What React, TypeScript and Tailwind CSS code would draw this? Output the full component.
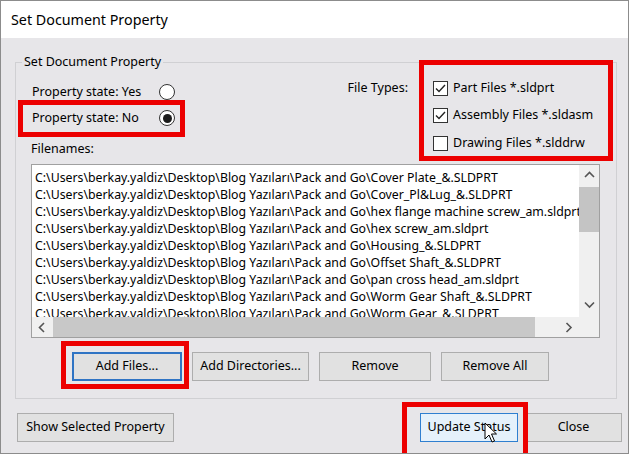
import React from "react";

const base = "C:\\Users\\berkay.yaldiz\\Desktop\\Blog Yazıları\\Pack and Go\\";
const files = [
  "Cover Plate_&.SLDPRT",
  "Cover_Pl&Lug_&.SLDPRT",
  "hex flange machine screw_am.sldprt",
  "hex screw_am.sldprt",
  "Housing_&.SLDPRT",
  "Offset Shaft_&.SLDPRT",
  "pan cross head_am.sldprt",
  "Worm Gear Shaft_&.SLDPRT",
  "Worm Gear_&.SLDPRT",
];

function Radio({ checked }: { checked?: boolean }) {
  return (
    <div className="w-[16px] h-[16px] rounded-full border border-[#333] bg-white flex items-center justify-center">
      {checked && <div className="w-[9px] h-[9px] rounded-full bg-[#1c1c1c]" />}
    </div>
  );
}

function Check({ checked, label }: { checked?: boolean; label: string }) {
  return (
    <div className="flex items-center h-[20px]">
      <div className="w-[15px] h-[15px] border border-[#333] bg-white flex items-center justify-center">
        {checked && (
          <svg width="11" height="9" viewBox="0 0 11 9">
            <polyline points="1,4.5 4,7.5 10,1" fill="none" stroke="#222" strokeWidth="1.4" />
          </svg>
        )}
      </div>
      <span className="ml-[5px] text-[12.5px]">{label}</span>
    </div>
  );
}

function Chevron({ dir }: { dir: "up" | "down" | "left" | "right" }) {
  const pts =
    dir === "up"
      ? "1,6 5.5,1.5 10,6"
      : dir === "down"
      ? "1,1.5 5.5,6 10,1.5"
      : dir === "left"
      ? "6,1 1.5,5.5 6,10"
      : "1.5,1 6,5.5 1.5,10";
  const w = dir === "up" || dir === "down" ? 11 : 8;
  const h = dir === "up" || dir === "down" ? 8 : 11;
  return (
    <svg width={w} height={h} viewBox={`0 0 ${w} ${h}`}>
      <polyline points={pts} fill="none" stroke="#555" strokeWidth="1.6" />
    </svg>
  );
}

export default function App() {
  return (
    <div className="w-[629px] h-[454px] bg-white font-['Noto_Sans',sans-serif] text-black">
      <div className="relative w-[629px] h-[454px] border border-[#8c8c8c] bg-[#e7e6e9] flex flex-col overflow-hidden">
        <div className="h-[37px] shrink-0 bg-white flex items-center pl-[10px] text-[14.3px]">
          Set Document Property
        </div>

        <fieldset className="mt-[16px] ml-[14px] mr-[11px] border border-[#d0d0d3] min-w-0 p-0">
          <legend className="ml-[6px] px-[2px] text-[12.5px] leading-[16px]">Set Document Property</legend>
          <div className="px-[15px] pb-[17px]">
            <div className="flex items-start">
              <div className="w-[287px] flex flex-col pt-[12px]">
                <div className="flex items-center h-[20px] pl-[1px]">
                  <span className="w-[127px] text-[12.5px]">Property state: Yes</span>
                  <Radio />
                </div>
                <div className="flex items-center h-[20px] pl-[1px] mt-[6px]">
                  <span className="w-[127px] text-[12.5px]">Property state: No</span>
                  <Radio checked />
                </div>
                <div className="h-[20px] leading-[20px] mt-[11px] text-[12.5px]">Filenames:</div>
              </div>
              <div className="w-[90px] text-right pt-[8px] leading-[20px] text-[12.5px]">File Types:</div>
              <div className="ml-[25px] pt-[8px] flex flex-col gap-[7.5px]">
                <Check checked label="Part Files *.sldprt" />
                <Check checked label="Assembly Files *.sldasm" />
                <Check label="Drawing Files *.slddrw" />
              </div>
            </div>

            <div className="mt-[5px] mr-[1px] h-[174px] border border-[#a0a0a0] bg-white flex flex-col">
              <div className="h-[152px] flex">
                <div className="flex-1 min-w-0 overflow-hidden pt-[3.5px] pl-[3px] text-[12.3px] leading-[17px]">
                  {files.map((f) => (
                    <div key={f} className="whitespace-nowrap">
                      {base + f}
                    </div>
                  ))}
                </div>
                <div className="w-[20px] bg-[#f0f0f0] flex flex-col">
                  <div className="h-[20px] flex items-center justify-center">
                    <Chevron dir="up" />
                  </div>
                  <div className="mt-[2px] h-[45px] bg-[#c4c4c4]" />
                  <div className="flex-1" />
                  <div className="h-[20px] mb-[2px] flex items-center justify-center">
                    <Chevron dir="down" />
                  </div>
                </div>
              </div>
              <div className="h-[20px] flex bg-[#f0f0f0]">
                <div className="w-[20px] flex items-center justify-center">
                  <Chevron dir="left" />
                </div>
                <div className="ml-[1px] w-[482px] bg-[#c8c8c8]" />
                <div className="flex-1" />
                <div className="w-[20px] flex items-center justify-center">
                  <Chevron dir="right" />
                </div>
                <div className="w-[20px]" />
              </div>
            </div>

            <div className="flex mt-[14px] ml-[41px] gap-[10px]">
              <button className="w-[110px] h-[29px] bg-[#e1e1e1] border-2 border-[#2f74c4] text-[12.5px]">Add Files...</button>
              <button className="w-[117px] h-[29px] bg-[#e1e1e1] border border-[#adadad] text-[12.5px]">Add Directories...</button>
              <button className="w-[112px] h-[29px] bg-[#e1e1e1] border border-[#adadad] text-[12.5px]">Remove</button>
              <button className="w-[108px] h-[29px] bg-[#e1e1e1] border border-[#adadad] text-[12.5px]">Remove All</button>
            </div>
          </div>
        </fieldset>

        <div className="flex mt-[14px]">
          <button className="ml-[16px] w-[157px] h-[29px] bg-[#e1e1e1] border border-[#adadad] text-[12.5px]">Show Selected Property</button>
          <button className="ml-auto w-[98px] h-[29px] bg-[#e5f1fb] border border-[#2f7fd0] text-[12.5px]">Update Status</button>
          <button className="ml-[7px] mr-[6px] w-[97px] h-[29px] bg-[#e1e1e1] border border-[#adadad] text-[12.5px]">Close</button>
        </div>

        {/* red annotation boxes */}
        <div className="absolute left-[17px] top-[99px] w-[167px] h-[37px] border-[5px] border-[#ec0000]" />
        <div className="absolute left-[418px] top-[59px] w-[194px] h-[101px] border-[5px] border-[#ec0000]" />
        <div className="absolute left-[60px] top-[340px] w-[128px] h-[48px] border-[5px] border-[#ec0000]" />
        <div className="absolute left-[401px] top-[401px] w-[126px] h-[60px] border-[5px] border-[#ec0000]" />

        {/* mouse cursor */}
        <svg className="absolute left-[483px] top-[421px]" width="14" height="22" viewBox="0 0 14 22">
          <path d="M1 1 L1 17 L5 13 L8 20 L10.5 19 L7.5 12 L12.5 12 Z" fill="#fff" stroke="#000" strokeWidth="1" strokeLinejoin="round" />
        </svg>
      </div>
    </div>
  );
}
